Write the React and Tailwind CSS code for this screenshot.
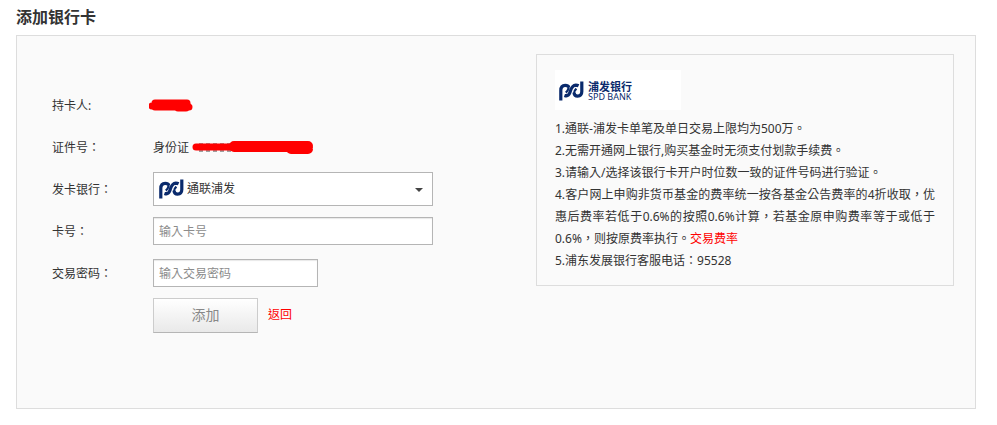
import React from 'react';

const SpdMark = ({ className }) => (
    <svg viewBox="0 0 25 20" className={className} fill="none" stroke="#0a2a6c" aria-hidden="true">
        <path d="M1.8 19.5V9.5C1.8 6 3.6 4.3 6.2 4.3C8 4.3 9.4 5 9.8 6.2" strokeWidth="3.2" />
        <path d="M5.4 14.4C8.2 15.4 10 14 10.8 11.8C12 8.4 12.6 4.4 16.8 4.2C18 4.2 18.8 4.4 19.6 4.8" strokeWidth="3.2" />
        <path d="M15 11.6C15.2 14 16.6 15.1 18.6 15.1C21.2 15.1 22.8 13.6 22.8 10.6V0.5" strokeWidth="3.2" />
        <path d="M9.4 4.8C10 7.6 8.6 10 6.8 11.6M17.4 7.6C16 8.8 14.8 10.2 15 12.4" strokeWidth="2.2" />
    </svg>
);

const Row = ({ label, htmlFor, children }) => (
    <div className="flex items-center h-[42px]">
        <label htmlFor={htmlFor} className="w-[101px] shrink-0 pt-0.5">{label}</label>
        {children}
    </div>
);

const inputStyle = "h-7 px-[5px] bg-white border border-[#b5b5b5] shadow-[inset_0_1px_1px_#e8e8e8] outline-none placeholder:text-[#8c8c8c]";

const App = () => {
    return (
        <div className="pl-4 pr-[21px] pb-4 bg-white text-xs text-[#333] font-['Noto_Sans','Noto_Sans_CJK_TC',sans-serif]">
            <h1 className="h-[35px] leading-[34px] text-base font-bold">添加银行卡</h1>

            <main className="flex items-start justify-between bg-[#fafafa] border border-[#ddd]">
                {/* Formulario */}
                <form className="pl-[35px] pt-12 pb-[72px]" onSubmit={(e) => e.preventDefault()}>
                    <Row label="持卡人:">
                        <svg width="44" height="14" viewBox="0 0 44 14" className="-ml-1" role="img" aria-label="持卡人">
                            <path d="M6 5H38M3 8H39M6 9H40M29 10H37" stroke="#f00" strokeWidth="7" strokeLinecap="round" />
                        </svg>
                    </Row>

                    <Row label="证件号：">
                        <span className="pt-0.5">身份证</span>
                        <svg width="124" height="14" viewBox="0 0 124 14" className="ml-0.5" role="img" aria-label="证件号">
                            <path d="M8 4H42M8 11H42" stroke="#444" strokeWidth="1" strokeDasharray="4 3" />
                            <path d="M5 7H42" stroke="#f00" strokeWidth="7" strokeLinecap="round" />
                            <path d="M43 6H117M43 7H117M100 9H117" stroke="#f00" strokeWidth="10" strokeLinecap="round" />
                        </svg>
                    </Row>

                    <Row label="发卡银行：" htmlFor="bank">
                        <div className="relative">
                            <select id="bank" className="block appearance-none w-[280px] h-[34px] pl-[33px] pr-8 bg-white border border-[#b5b5b5] outline-none">
                                <option>通联浦发</option>
                            </select>
                            <SpdMark className="absolute left-1.5 top-[7px] w-[25px] h-5 pointer-events-none" />
                            <svg width="8" height="4" viewBox="0 0 8 4" className="absolute right-2.5 top-4 pointer-events-none" aria-hidden="true">
                                <path d="M0 0H8L4 4Z" fill="#444" />
                            </svg>
                        </div>
                    </Row>

                    <Row label="卡号：" htmlFor="card">
                        <input id="card" type="text" placeholder="输入卡号" className={`w-[280px] ${inputStyle}`} />
                    </Row>

                    <Row label="交易密码：" htmlFor="password">
                        <input id="password" type="password" placeholder="输入交易密码" className={`w-[165px] ${inputStyle}`} />
                    </Row>

                    <div className="flex items-center h-[42px] pl-[101px]">
                        <button type="submit" className="w-[105px] h-[35px] text-sm text-[#888] bg-linear-to-b from-white to-[#e9e9e9] border border-[#ccc] border-b-[#b5b5b5]">添加</button>
                        <a href="#" className="ml-2.5 text-[#f00]">返回</a>
                    </div>
                </form>

                {/* Información del banco */}
                <aside className="w-[418px] mt-[18px] mr-[21px] px-[18px] pt-[15px] pb-[13px] border border-[#ddd]">
                    <div className="flex items-center w-[126px] h-10 mb-2 pl-1 pt-0.5 bg-white text-[#0a2a6c]">
                        <SpdMark className="w-[25px] h-5" />
                        <div className="ml-1">
                            <p className="text-[11px] leading-[11px] font-bold">浦发银行</p>
                            <p className="text-[9px] leading-[10px]">SPD BANK</p>
                        </div>
                    </div>
                    <div className="leading-[22px] text-justify">
                        <p>1.通联-浦发卡单笔及单日交易上限均为500万。</p>
                        <p>2.无需开通网上银行,购买基金时无须支付划款手续费。</p>
                        <p>3.请输入/选择该银行卡开户时位数一致的证件号码进行验证。</p>
                        <p>
                            4.客户网上申购非货币基金的费率统一按各基金公告费率的4折收取，优惠后费率若低于0.6%的按照0.6%计算，若基金原申购费率等于或低于0.6%，则按原费率执行。<a href="#" className="text-[#f00]">交易费率</a>
                        </p>
                        <p>5.浦东发展银行客服电话：95528</p>
                    </div>
                </aside>
            </main>
        </div>
    );
};

export default App;
